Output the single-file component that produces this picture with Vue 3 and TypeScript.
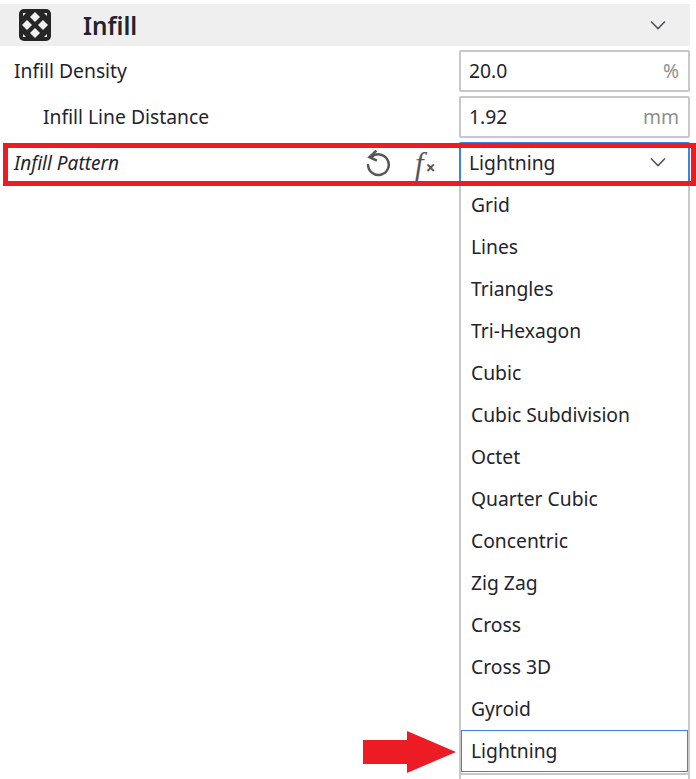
<script setup lang="ts">
const options: string[] = ['Grid','Lines','Triangles','Tri-Hexagon','Cubic','Cubic Subdivision','Octet','Quarter Cubic','Concentric','Zig Zag','Cross','Cross 3D','Gyroid','Lightning']
</script>

<template>
  <div class="panel">
    <div class="header">
      <svg class="logo" width="34" height="34" viewBox="0 0 34 34">
        <rect x="1" y="1" width="32" height="32" rx="5" fill="#262626"/>
        <g fill="#f2f2f2">
          <path d="M17 4l5 5-5 5-5-5z"/>
          <path d="M17 20l5 5-5 5-5-5z"/>
          <path d="M9 12l5 5-5 5-5-5z"/>
          <path d="M25 12l5 5-5 5-5-5z"/>
          <path d="M5 5h3L5 8z"/>
          <path d="M29 5h-3l3 3z"/>
          <path d="M5 29h3l-3-3z"/>
          <path d="M29 29h-3l3-3z"/>
        </g>
      </svg>
      <span class="title">Infill</span>
      <svg class="chev" width="16" height="10" viewBox="0 0 16 10"><path d="M1 1.500l7 7 7-7" fill="none" stroke="#55525a" stroke-width="1.600"/></svg>
    </div>

    <div class="row">
      <span class="label">Infill Density</span>
      <div class="field"><span>20.0</span><span class="unit">%</span></div>
    </div>
    <div class="row">
      <span class="label indent">Infill Line Distance</span>
      <div class="field"><span>1.92</span><span class="unit">mm</span></div>
    </div>
    <div class="row select-row">
      <span class="label italic">Infill Pattern</span>
      <svg class="reset" width="28" height="28" viewBox="0 0 26 26">
        <path d="M6.200 8.200A9.600 9.600 0 1 1 3.800 14" fill="none" stroke="#55555a" stroke-width="2.300"/>
        <path d="M11.500 1.500L5 7.600l7 3.300" fill="none" stroke="#55555a" stroke-width="2.300"/>
      </svg>
      <span class="fx">f<small>×</small></span>
      <div class="field select">
        <span>Lightning</span>
        <svg width="16" height="10" viewBox="0 0 16 10"><path d="M1 1.500l7 7 7-7" fill="none" stroke="#55525a" stroke-width="1.600"/></svg>
      </div>
    </div>

    <ul class="list">
      <li v-for="o in options" :key="o" :class="{ active: o === 'Lightning' }">{{ o }}</li>
      <li class="rest"></li>
    </ul>

    <div class="red-box"></div>
    <svg class="arrow" width="93" height="42" viewBox="0 0 93 42"><path d="M0 9H44V0L93 21 44 42V33H0z" fill="#ed1c24"/></svg>
  </div>
</template>

<style>
html, body { margin: 0; background: #fff; overflow: hidden; }
</style>

<style scoped>
.panel {
  position: relative;
  width: 696px;
  height: 779px;
  overflow: hidden;
  box-sizing: border-box;
  padding-top: 4px;
  font-family: "Noto Sans", sans-serif;
  font-size: 19.3px;
  color: #23232d;
  background: #fff;
}
.header {
  width: 690px;
  height: 42px;
  background: #efefef;
  display: flex;
  align-items: center;
  padding-left: 18px;
  padding-right: 24px;
  box-sizing: border-box;
}
.title { font-weight: 600; font-size: 24.300px; margin-left: 31px; flex: 1; }
.row {
  width: 690px;
  height: 42px;
  margin-top: 4px;
  display: flex;
  align-items: center;
}
.label { flex: 1; padding-left: 14px; padding-bottom: 2px; }
.indent { padding-left: 43px; }
.italic { font-style: italic; font-size: 19px; padding-bottom: 0; }
.field {
  width: 231px;
  height: 42px;
  box-sizing: border-box;
  border: 2px solid #c8c8c8;
  border-radius: 2px;
  display: flex;
  align-items: center;
  justify-content: space-between;
  padding: 0 9px 2px 8px;
}
.unit { color: #8f8f8f; }
.select-row { position: relative; }
.reset { margin-right: 23px; }
.fx { width: 44px; font-family: "Liberation Serif", serif; font-style: italic; font-size: 31px; color: #55555a; line-height: 1; }
.fx small { font-family: "Noto Sans", sans-serif; font-style: normal; font-weight: 700; font-size: 17px; margin-left: 2px; }
.select {
  border-color: #3b82e8;
  border-bottom: none;
  padding-right: 22px;
  padding-left: 8px;
  padding-bottom: 4px;
}
.list {
  list-style: none;
  margin: 0 0 0 459px;
  padding: 0;
  width: 231px;
  box-sizing: border-box;
  border-left: 2px solid #c8c8c8;
  border-right: 2px solid #c8c8c8;
}
.list li {
  height: 42px;
  line-height: 42px;
  padding-left: 10px;
  box-sizing: border-box;
}
.list li.active {
  border: 1px solid #3b82e8;
  line-height: 40px;
  padding-left: 9px;
}
.list li.rest { border-top: 2px solid #c8c8c8; margin-top: 1px; }
.red-box {
  position: absolute;
  left: 3px;
  top: 143px;
  width: 693px;
  height: 43px;
  box-sizing: border-box;
  border: 5px solid #ed1c24;
}
.arrow { position: absolute; left: 363px; top: 731px; }
</style>
